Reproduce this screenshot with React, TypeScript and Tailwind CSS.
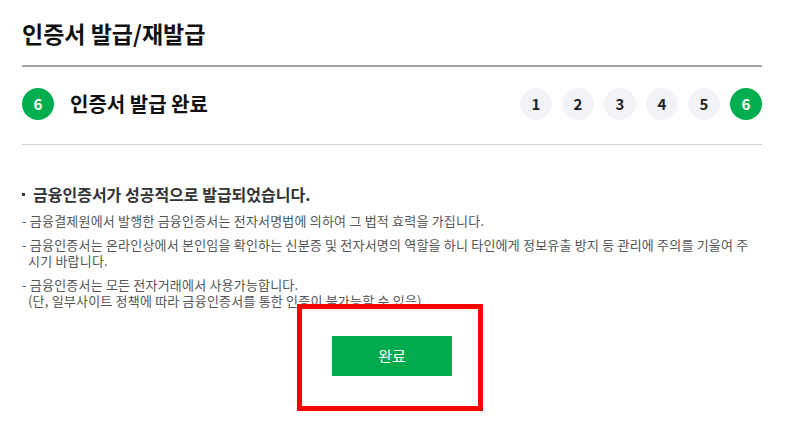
const steps = [1, 2, 3, 4, 5, 6];

const notes = [
  ['금융결제원에서 발행한 금융인증서는 전자서명법에 의하여 그 법적 효력을 가집니다.'],
  ['금융인증서는 온라인상에서 본인임을 확인하는 신분증 및 전자서명의 역할을 하니 타인에게 정보유출 방지 등 관리에 주의를 기울여 주시기 바랍니다.'],
  ['금융인증서는 모든 전자거래에서 사용가능합니다.', '(단, 일부사이트 정책에 따라 금융인증서를 통한 인증이 불가능할 수 있음)'],
];

export default function App() {
  const current = 6;

  return (
    <div className="min-h-[428px] bg-white font-['Noto_Sans_CJK_KR','Noto_Sans',sans-serif]">
      <div className="ml-[22px] w-[740px]">
        <h1 className="border-b-2 border-[#a3a3a3] pt-[17px] pb-[16px] text-[23px] leading-[32px] font-bold text-[#111]">
          인증서 발급/재발급
        </h1>

        <div className="flex items-center justify-between border-b border-[#cfcfd4] pt-[21px] pb-[24px]">
          <div className="flex items-center gap-[16px]">
            <span className="flex h-[32px] w-[32px] items-center justify-center rounded-full bg-[#00ae4f] text-[15px] font-bold text-white">
              {current}
            </span>
            <span className="text-[20px] leading-[26px] font-bold text-[#111]">인증서 발급 완료</span>
          </div>
          <div className="flex gap-[10px]">
            {steps.map((n) => (
              <span
                key={n}
                className={
                  n === current
                    ? 'flex h-[32px] w-[32px] items-center justify-center rounded-full bg-[#00ae4f] text-[15px] font-bold text-white'
                    : 'flex h-[32px] w-[32px] items-center justify-center rounded-full bg-[#f2f3f7] text-[15px] font-bold text-[#222]'
                }
              >
                {n}
              </span>
            ))}
          </div>
        </div>

        <p className="mt-[39px] flex items-center text-[16px] leading-[20px] font-bold text-[#333]">
          <span className="mr-[8px] inline-block h-[3px] w-[3px] bg-[#333]"></span>
          금융인증서가 성공적으로 발급되었습니다.
        </p>

        <ul className="mt-[9px] flex flex-col gap-[8px] pr-[10px] text-[13px] leading-[16px] tracking-[0.2px] text-[#555]">
          {notes.map((lines, i) => (
            <li key={i} className="pl-[6px] -indent-[6px]">
              - {lines[0]}
              {lines[1] && (
                <>
                  <br />
                  {lines[1]}
                </>
              )}
            </li>
          ))}
        </ul>

        <div className="mt-[27px] flex justify-center">
          <div className="relative">
            <button className="h-[40px] w-[120px] bg-[#00ab4e] text-[15px] font-normal text-white">완료</button>
            <div className="pointer-events-none absolute top-[-32px] left-[-35px] h-[107px] w-[186px] border-[5px] border-[#ff0000]"></div>
          </div>
        </div>
      </div>
    </div>
  );
}
